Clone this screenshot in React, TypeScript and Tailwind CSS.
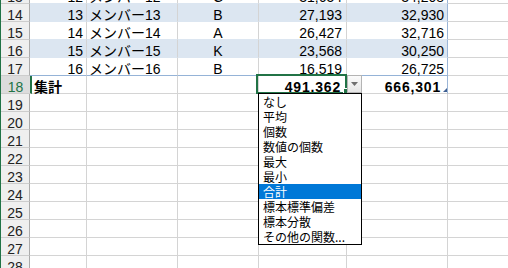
import React from "react";

type DataRow = { n: number; band: boolean; cells: string[] };

const tableRows: DataRow[] = [
  { n: 13, band: false, cells: ["12", "メンバー12", "C", "31,654", "34,208"] },
  { n: 14, band: true, cells: ["13", "メンバー13", "B", "27,193", "32,930"] },
  { n: 15, band: false, cells: ["14", "メンバー14", "A", "26,427", "32,716"] },
  { n: 16, band: true, cells: ["15", "メンバー15", "K", "23,568", "30,250"] },
  { n: 17, band: false, cells: ["16", "メンバー16", "B", "16,519", "26,725"] },
];

const emptyRows = [19, 20, 21, 22, 23, 24, 25, 26, 27, 28];

const menu = [
  "なし",
  "平均",
  "個数",
  "数値の個数",
  "最大",
  "最小",
  "合計",
  "標本標準偏差",
  "標本分散",
  "その他の関数...",
];

function Header({ n }: { n: number }) {
  return (
    <div className="w-[29px] h-[18px] shrink-0 bg-[#efefef] border-r border-b border-r-[#ababab] border-b-[#cdcdcd] flex items-end justify-center leading-[12px] text-[#222]">
      {n}
    </div>
  );
}

function TableRow({ row, last }: { row: DataRow; last: boolean }) {
  const bg = row.band ? "bg-[#dce6f1]" : "bg-white";
  const bottom = last ? "border-b-[#95b3d7]" : "border-b-[#dce6f1]";
  return (
    <div className="flex h-[18px]">
      <Header n={row.n} />
      <div className={`w-[57px] shrink-0 border-r border-b border-r-[#d4d4d4] ${bottom} ${bg} flex items-end justify-end pr-[3px] leading-[12px]`}>
        {row.cells[0]}
      </div>
      <div className={`w-[91px] shrink-0 border-r border-b border-r-[#d4d4d4] ${bottom} ${bg} flex items-end pl-[2px] leading-[12px] whitespace-nowrap`}>
        {row.cells[1]}
      </div>
      <div className={`w-[81px] shrink-0 border-r border-b border-r-[#d4d4d4] ${bottom} ${bg} flex items-end justify-center leading-[12px]`}>
        {row.cells[2]}
      </div>
      <div className={`w-[88px] shrink-0 border-r border-b border-r-[#d4d4d4] ${bottom} ${bg} flex items-end justify-end pr-[4px] leading-[12px]`}>
        {row.cells[3]}
      </div>
      <div className={`w-[101px] shrink-0 border-r border-b border-r-[#9bb5d6] ${bottom} ${bg} flex items-end justify-end pr-[3px] leading-[12px]`}>
        {row.cells[4]}
      </div>
      <div className="flex-1 border-b border-b-[#d4d4d4] bg-white" />
    </div>
  );
}

function EmptyRow({ n }: { n: number }) {
  return (
    <div className="flex h-[18px]">
      <Header n={n} />
      <div className="w-[57px] shrink-0 border-r border-b border-[#d4d4d4]" />
      <div className="w-[91px] shrink-0 border-r border-b border-[#d4d4d4]" />
      <div className="w-[81px] shrink-0 border-r border-b border-[#d4d4d4]" />
      <div className="w-[88px] shrink-0 border-r border-b border-[#d4d4d4]" />
      <div className="w-[101px] shrink-0 border-r border-b border-[#d4d4d4]" />
      <div className="flex-1 border-b border-[#d4d4d4]" />
    </div>
  );
}

function TotalRow() {
  return (
    <div className="flex h-[18px] font-bold">
      <div className="w-[31px] h-[18px] shrink-0 bg-[#dcdcdc] border-r-2 border-b border-r-[#217346] border-b-[#cdcdcd] flex items-end justify-center leading-[12px] text-[#217346] font-normal">
        18
      </div>
      <div className="w-[55px] shrink-0 border-r border-b border-[#d4d4d4] flex items-end pl-[2px] leading-[12px]">
        集計
      </div>
      <div className="w-[91px] shrink-0 border-r border-b border-[#d4d4d4]" />
      <div className="w-[81px] shrink-0 border-r border-b border-[#d4d4d4]" />
      <div className="w-[88px] shrink-0 border-r border-b border-[#d4d4d4] flex items-end justify-end pr-[5px] leading-[12px] tracking-[0.8px]">
        491,362
      </div>
      <div className="w-[101px] shrink-0 border-r border-b border-r-[#9bb5d6] border-b-[#d4d4d4] flex items-end justify-end pr-[6px] leading-[12px] tracking-[0.8px]">
        666,301
      </div>
      <div className="flex-1 border-b border-[#d4d4d4]" />
    </div>
  );
}

export default function App() {
  return (
    <div className="relative w-[508px] h-[268px] overflow-hidden bg-white border-l border-l-[#217346] font-['Liberation_Sans','Noto_Sans_CJK_JP',sans-serif] text-[14px] text-black">
      <div className="-mt-[14px] flex flex-col">
        {tableRows.map((r, i) => (
          <TableRow key={r.n} row={r} last={i === tableRows.length - 1} />
        ))}
        <TotalRow />
        {emptyRows.map((n) => (
          <EmptyRow key={n} n={n} />
        ))}
      </div>

      {/* selection border */}
      <div className="absolute left-[255px] top-[74px] w-[91px] h-[20px] border-2 border-[#217346]" />
      {/* fill handle */}
      <div className="absolute left-[342px] top-[88px] w-[6px] h-[6px] bg-[#217346] border border-white" />
      {/* table resize handle */}
      <svg className="absolute left-[442px] top-[88px]" width="4" height="4" viewBox="0 0 4 4">
        <polygon points="4,0 4,4 0,4" fill="#3e5f91" />
      </svg>

      {/* dropdown button */}
      <div className="absolute left-[346px] top-[75px] w-[15px] h-[18px] border border-[#b4b4b4] bg-linear-to-b from-[#fbfbfb] to-[#e6e6e6] flex items-center justify-center">
        <svg width="7" height="4" viewBox="0 0 7 4">
          <polygon points="0,0 7,0 3.5,4" fill="#6f6f6f" />
        </svg>
      </div>

      {/* dropdown list */}
      <div className="absolute left-[257px] top-[93px] w-[104px] h-[152px] border border-black bg-white flex flex-col font-['Noto_Sans_CJK_JP',sans-serif] text-[12px] leading-[15px]">
        {menu.map((m) =>
          m === "合計" ? (
            <div key={m} className="h-[15px] pl-[4px] bg-[#0078d7] text-white whitespace-nowrap">
              {m}
            </div>
          ) : (
            <div key={m} className="h-[15px] pl-[4px] text-black whitespace-nowrap">
              {m}
            </div>
          )
        )}
      </div>
    </div>
  );
}
